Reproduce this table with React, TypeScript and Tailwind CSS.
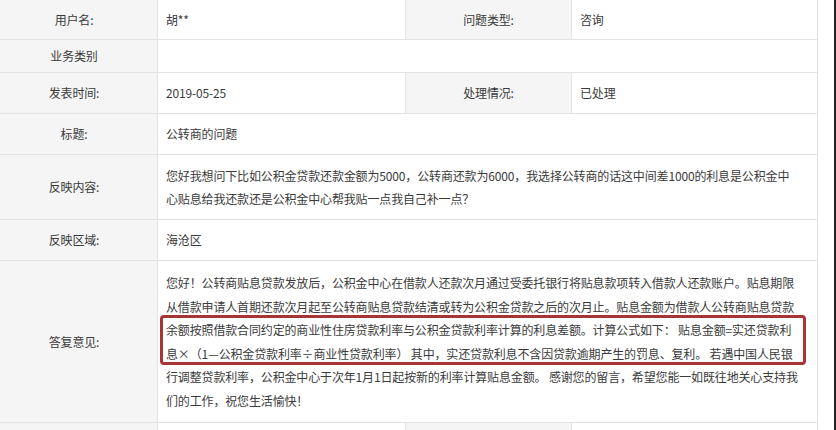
import React from "react";

const font = { fontFamily: '"Noto Sans CJK SC", "Noto Sans", sans-serif' };

function Label({ children, first }: { children?: React.ReactNode; first?: boolean }) {
  return (
    <div
      className={
        "flex items-center justify-center bg-[#f5f5f5] border-r border-[#e3e3e3] shrink-0 " +
        (first ? "w-[158px] pr-[9px]" : "w-[166px]")
      }
    >
      {children}
    </div>
  );
}

function Value({ children, w }: { children?: React.ReactNode; w: string }) {
  return (
    <div className={"flex items-center pl-[8px] bg-white border-r border-[#e3e3e3] shrink-0 " + w}>
      {children}
    </div>
  );
}

export default function App() {
  return (
    <div
      className="w-[836px] h-[430px] overflow-hidden bg-white text-[12px] text-[#3a3a3a] tracking-[-0.15px] flex"
      style={font}
    >
      <div className="w-[818px] flex flex-col shrink-0">
        {/* row 1 */}
        <div className="flex h-[40px] border-b border-[#e3e3e3] shrink-0">
          <Label first>用户名:</Label>
          <Value w="w-[248px]">胡**</Value>
          <Label>问题类型:</Label>
          <Value w="w-[246px]">咨询</Value>
        </div>
        {/* row 2 */}
        <div className="flex h-[33px] border-b border-[#e3e3e3] shrink-0">
          <Label first>业务类别</Label>
          <Value w="w-[660px]"></Value>
        </div>
        {/* row 3 */}
        <div className="flex h-[41px] border-b border-[#e3e3e3] shrink-0">
          <Label first>发表时间:</Label>
          <Value w="w-[248px]">2019-05-25</Value>
          <Label>处理情况:</Label>
          <Value w="w-[246px]">已处理</Value>
        </div>
        {/* row 4 */}
        <div className="flex h-[41px] border-b border-[#e3e3e3] shrink-0">
          <Label first>标题:</Label>
          <Value w="w-[660px]">公转商的问题</Value>
        </div>
        {/* row 5 */}
        <div className="flex h-[65px] border-b border-[#e3e3e3] shrink-0">
          <Label first>反映内容:</Label>
          <Value w="w-[660px]">
            <div className="leading-[23px] whitespace-nowrap">
              <div>您好我想问下比如公积金贷款还款金额为5000，公转商还款为6000，我选择公转商的话这中间差1000的利息是公积金中</div>
              <div>心贴息给我还款还是公积金中心帮我贴一点我自己补一点？</div>
            </div>
          </Value>
        </div>
        {/* row 6 */}
        <div className="flex h-[41px] border-b border-[#e3e3e3] shrink-0">
          <Label first>反映区域:</Label>
          <Value w="w-[660px]">海沧区</Value>
        </div>
        {/* row 7 */}
        <div className="flex h-[162px] border-b border-[#e3e3e3] shrink-0">
          <Label first>答复意见:</Label>
          <Value w="w-[660px]">
            <div className="relative leading-[23.5px] whitespace-nowrap">
              <div>您好！公转商贴息贷款发放后，公积金中心在借款人还款次月通过受委托银行将贴息款项转入借款人还款账户。贴息期限</div>
              <div>从借款申请人首期还款次月起至公转商贴息贷款结清或转为公积金贷款之后的次月止。贴息金额为借款人公转商贴息贷款</div>
              <div>余额按照借款合同约定的商业性住房贷款利率与公积金贷款利率计算的利息差额。计算公式如下： 贴息金额=实还贷款利</div>
              <div>息×（1—公积金贷款利率÷商业性贷款利率） 其中，实还贷款利息不含因贷款逾期产生的罚息、复利。 若遇中国人民银</div>
              <div>行调整贷款利率，公积金中心于次年1月1日起按新的利率计算贴息金额。 感谢您的留言，希望您能一如既往地关心支持我</div>
              <div>们的工作，祝您生活愉快！</div>
              <div className="absolute left-[-6px] top-[44px] w-[646px] h-[50px] border-[3px] border-[#a93434] rounded-[4px]"></div>
            </div>
          </Value>
        </div>
        {/* row 8 */}
        <div className="flex h-[40px] shrink-0">
          <Label first></Label>
          <Value w="w-[248px]"></Value>
          <Label></Label>
          <Value w="w-[246px]"></Value>
        </div>
      </div>
      <div className="flex-1" />
      <div className="w-[2px] bg-[#222]" />
    </div>
  );
}
